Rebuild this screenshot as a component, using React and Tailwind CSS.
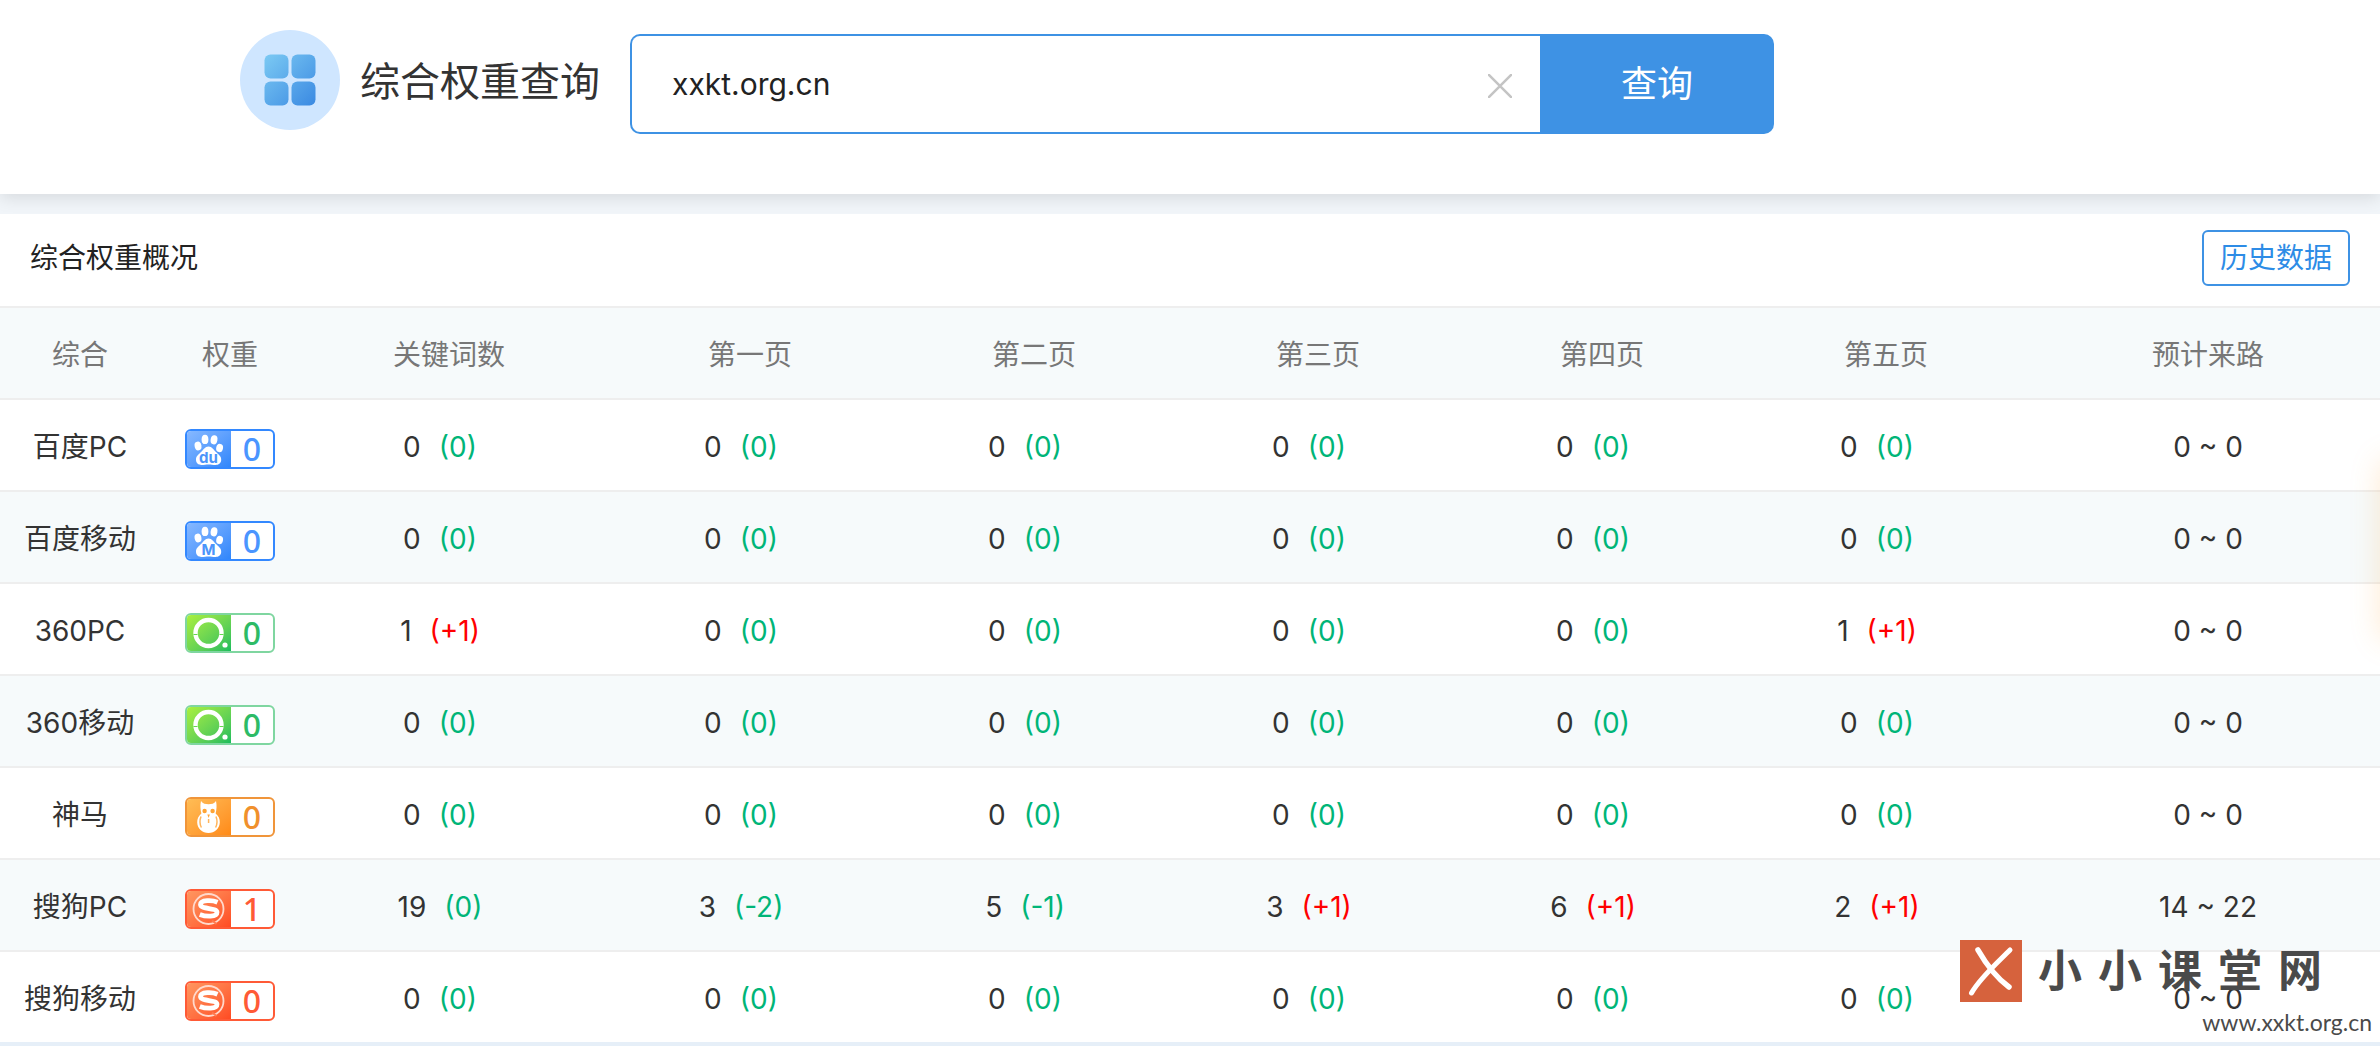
import React, { useState } from 'react';

const columnas = ['综合', '权重', '关键词数', '第一页', '第二页', '第三页', '第四页', '第五页', '预计来路'];

const anchos = ['w-[160px]', 'w-[140px]', 'w-[308px]', 'w-[284px]', 'w-[284px]', 'w-[284px]', 'w-[284px]', 'w-[284px]', ''];

const ceros = [[0, '0'], [0, '0'], [0, '0'], [0, '0'], [0, '0'], [0, '0']];

const filas = [
  { nombre: '百度PC', icono: 'baidu', letra: 'du', peso: 0, datos: ceros, visitas: '0 ~ 0' },
  { nombre: '百度移动', icono: 'baidu', letra: 'M', peso: 0, datos: ceros, visitas: '0 ~ 0' },
  { nombre: '360PC', icono: 'so', peso: 0, datos: [[1, '+1'], [0, '0'], [0, '0'], [0, '0'], [0, '0'], [1, '+1']], visitas: '0 ~ 0' },
  { nombre: '360移动', icono: 'so', peso: 0, datos: ceros, visitas: '0 ~ 0' },
  { nombre: '神马', icono: 'shenma', peso: 0, datos: ceros, visitas: '0 ~ 0' },
  { nombre: '搜狗PC', icono: 'sogou', peso: 1, datos: [[19, '0'], [3, '-2'], [5, '-1'], [3, '+1'], [6, '+1'], [2, '+1']], visitas: '14 ~ 22' },
  { nombre: '搜狗移动', icono: 'sogou', peso: 0, datos: ceros, visitas: '0 ~ 0' }
];

const estilos = {
  baidu: { caja: 'border-[#3388ff] text-[#4a95ff]', fondo: 'bg-linear-to-br from-[#86b8ff] to-[#2f86fb]' },
  so: { caja: 'border-[#7fd6a0] text-[#2dbb66]', fondo: 'bg-linear-to-br from-[#a8f03c] to-[#12bd5c]' },
  shenma: { caja: 'border-[#f0953a] text-[#f0902c]', fondo: 'bg-linear-to-br from-[#ffbd55] to-[#ff8a14]' },
  sogou: { caja: 'border-[#ff5a36] text-[#ff5a36]', fondo: 'bg-linear-to-br from-[#ff9660] to-[#ff4a22]' }
};

const Dibujo = ({ icono, letra }) => {
  if (icono === 'baidu') {
    return (
      <svg viewBox="0 0 44 36" className="w-11 h-9">
        <g fill="#fff">
          <ellipse cx="11" cy="15" rx="3.4" ry="4.4" transform="rotate(-12 11 15)" />
          <ellipse cx="18" cy="8.4" rx="3.4" ry="4.7" />
          <ellipse cx="27" cy="8.8" rx="3.4" ry="4.6" transform="rotate(10 27 8.8)" />
          <ellipse cx="32.6" cy="17" rx="3.4" ry="4.2" transform="rotate(12 32.6 17)" />
          <path d="M21.5 15.5c3.6 0 5 3.2 7.5 5.6c2.8 2.7 5.4 4.4 5.2 8c-.2 3.6-3 5-5.8 4.900c-2.600-.1-4.400-.5-6.900-.5s-4.300.4-6.900.5c-2.800.1-5.400-1.300-5.600-4.900c-.2-3.600 2.200-5.300 5-8c2.500-2.400 3.900-5.600 7.500-5.600z" />
        </g>
        <text x="21.5" y="31.5" textAnchor="middle" fontSize="15" fontWeight="700" fill="#4b94fa">{letra}</text>
      </svg>
    );
  }
  if (icono === 'so') {
    return (
      <svg viewBox="0 0 44 36" className="w-11 h-9">
        <circle cx="21.5" cy="18" r="13" fill="none" stroke="#fff" strokeWidth="4.4" />
        <path d="M6.5 19.500h4M32.500 19.500h4" stroke="#63d94c" strokeWidth="1" />
        <circle cx="38" cy="30" r="2.6" fill="#fff" />
      </svg>
    );
  }
  if (icono === 'shenma') {
    return (
      <svg viewBox="0 0 44 36" className="w-11 h-9">
        <path d="M14 2c2 3 4.500 3.200 7.500 3.200S27 5 29 2c1 4.500.600 8.500-.400 12.500c3 2.300 4.400 5.500 4.200 9c-.4 6-5 10.500-11.300 10.500S10.400 29.500 10.200 23.500c-.1-3.500 1.300-6.700 4.200-9C13.400 10.500 13 6.500 14 2z" fill="#fff" />
        <circle cx="17.6" cy="12" r="2.2" fill="#ffa435" />
        <circle cx="25.6" cy="12" r="2.2" fill="#ffa435" />
        <path d="M20.3 15.500h2.600l-1.300 3.500z" fill="#ffa435" />
        <path d="M14 17.500c-1.500 4-1.200 8 .4 11M29 17.500c1.500 4 1.200 8-.4 11M21.600 20v4" stroke="#ffb55c" strokeWidth="1.5" fill="none" />
      </svg>
    );
  }
  return (
    <svg viewBox="0 0 44 36" className="w-11 h-9">
      <circle cx="21.5" cy="18" r="15" fill="none" stroke="#ffd9cc" strokeWidth="1.8" />
      <path d="M25 29.500l4.500 3.500" stroke="#ff7a50" strokeWidth="2" />
      <path d="M30.500 11.200c-5-2.200-17-2.600-17 2.400c0 5 16.500 3 16.500 7.600c0 5.200-11.500 4.400-17.200 2.200" fill="none" stroke="#fff" strokeWidth="4.8" />
    </svg>
  );
};

const Insignia = ({ icono, letra, peso }) => (
  <span className={`inline-flex w-[90px] h-10 rounded-md border-2 bg-white align-middle ${estilos[icono].caja}`}>
    <span className={`flex w-11 items-center justify-center rounded-l-sm ${estilos[icono].fondo}`}>
      <Dibujo icono={icono} letra={letra} />
    </span>
    <span className="flex-1 text-[32px] leading-9 font-medium font-['Noto_Sans',sans-serif]">{peso}</span>
  </span>
);

const Buscador = () => {
  const [dominio, setDominio] = useState('xxkt.org.cn');

  return (
    <header className="relative z-10 flex items-start bg-white pt-[30px] pb-[60px] pl-60 shadow-[0_4px_16px_rgba(0,0,0,0.11)]">
      <svg viewBox="0 0 100 100" className="size-[100px] shrink-0">
        <defs>
          <linearGradient id="cuadros" gradientUnits="userSpaceOnUse" x1="25" y1="25" x2="75" y2="75">
            <stop offset="0" stopColor="#7bc9f3" />
            <stop offset="1" stopColor="#3b8ae2" />
          </linearGradient>
        </defs>
        <circle cx="50" cy="50" r="50" fill="#cfe6ff" />
        <g fill="url(#cuadros)">
          <rect x="24.5" y="24.5" width="24" height="24" rx="6" />
          <rect x="51.5" y="24.5" width="24" height="24" rx="6" />
          <rect x="24.5" y="51.5" width="24" height="24" rx="6" />
          <rect x="51.5" y="51.5" width="24" height="24" rx="6" />
        </g>
      </svg>
      <h1 className="ml-5 shrink-0 text-[40px] leading-[104px] text-[#333]">综合权重查询</h1>
      <form className="mt-1 ml-[30px] flex h-[100px] w-[1144px]" onSubmit={(e) => e.preventDefault()}>
        <div className="flex flex-1 items-center rounded-l-[10px] border-2 border-r-0 border-[#3e92e4]">
          <input
            type="text"
            aria-label="域名"
            value={dominio}
            onChange={(e) => setDominio(e.target.value)}
            className="h-full min-w-0 flex-1 bg-transparent pl-10 text-[30px] text-[#222] outline-none"
          />
          <button type="button" aria-label="清空" className="mt-1 mr-7 shrink-0" onClick={() => setDominio('')}>
            <svg viewBox="0 0 24 24" className="size-6" stroke="#c4c4c4" strokeWidth="2.5">
              <path d="M0 0L24 24M24 0L0 24" />
            </svg>
          </button>
        </div>
        <button type="submit" className="w-[234px] rounded-r-[10px] bg-[#3e92e4] text-4xl text-white">查询</button>
      </form>
    </header>
  );
};

const Celda = ({ valor, cambio }) => (
  <>
    {valor}
    <span className={`mx-[18px] ${cambio.startsWith('+') ? 'text-[#ff0000]' : 'text-[#00b578]'}`}>({cambio})</span>
  </>
);

const Tabla = () => (
  <table className="w-full table-fixed border-collapse text-center text-[28px] leading-10 text-[#333]">
    <colgroup>
      {anchos.map((ancho, i) => (
        <col key={i} className={ancho} />
      ))}
    </colgroup>
    <thead>
      <tr className="h-[92px] border-y-2 border-[#eee] bg-[#f6fafb] text-[#777]">
        {columnas.map((columna) => (
          <th key={columna} className="pt-1 font-normal nth-3:pr-[10px] nth-9:pl-2">{columna}</th>
        ))}
      </tr>
    </thead>
    <tbody>
      {filas.map((fila) => (
        <tr key={fila.nombre} className="h-[92px] border-b-2 border-[#eee] bg-white even:bg-[#f6fafb] last:border-[#e6eff8]">
          <td className="pt-1">{fila.nombre}</td>
          <td className="pt-1.5">
            <Insignia icono={fila.icono} letra={fila.letra} peso={fila.peso} />
          </td>
          {fila.datos.map(([valor, cambio], i) => (
            <td key={i} className="pt-1 nth-3:pr-[10px]">
              <Celda valor={valor} cambio={cambio} />
            </td>
          ))}
          <td className="pt-1 pl-2">{fila.visitas}</td>
        </tr>
      ))}
    </tbody>
  </table>
);

const MarcaAgua = () => (
  <div className="absolute right-2 bottom-1.5 flex flex-col items-end text-[#4a4a4a]">
    <div className="mr-[50px] flex items-center gap-4">
      <svg viewBox="0 0 62 62" className="size-[62px]">
        <rect width="62" height="62" fill="#d6623d" />
        <g fill="none" stroke="#fff" strokeLinecap="round">
          <path d="M18 10C26 24 38 39 49 47" strokeWidth="5.5" />
          <path d="M50 10C36 24 20 38 11.5 53" strokeWidth="5" />
        </g>
      </svg>
      <div className="flex gap-4 text-[44px] leading-[62px] font-bold">
        {['小', '小', '课', '堂', '网'].map((letra, i) => (
          <span key={i}>{letra}</span>
        ))}
      </div>
    </div>
    <p className="font-['Lato',sans-serif] text-[23px] leading-10">www.xxkt.org.cn</p>
  </div>
);

const App = () => (
  <div className="relative overflow-hidden bg-[#e6eff8] pb-1 font-['Inter','Noto_Sans_CJK_SC',sans-serif]">
    <Buscador />
    <main className="border-t-20 border-[#f1f5f9]">
      <div className="flex h-[92px] items-center justify-between bg-white px-[30px] pb-1">
        <h2 className="text-[28px] text-[#222]">综合权重概况</h2>
        <button type="button" className="h-14 rounded-md border-2 border-[#3e92e4] px-4 text-[28px] leading-none text-[#2d8ce6]">
          历史数据
        </button>
      </div>
      <Tabla />
    </main>
    <div className="absolute top-[460px] left-full h-[180px] w-20 rounded-lg shadow-[0_0_30px_rgba(255,160,50,0.22)]"></div>
    <MarcaAgua />
  </div>
);

export default App;
